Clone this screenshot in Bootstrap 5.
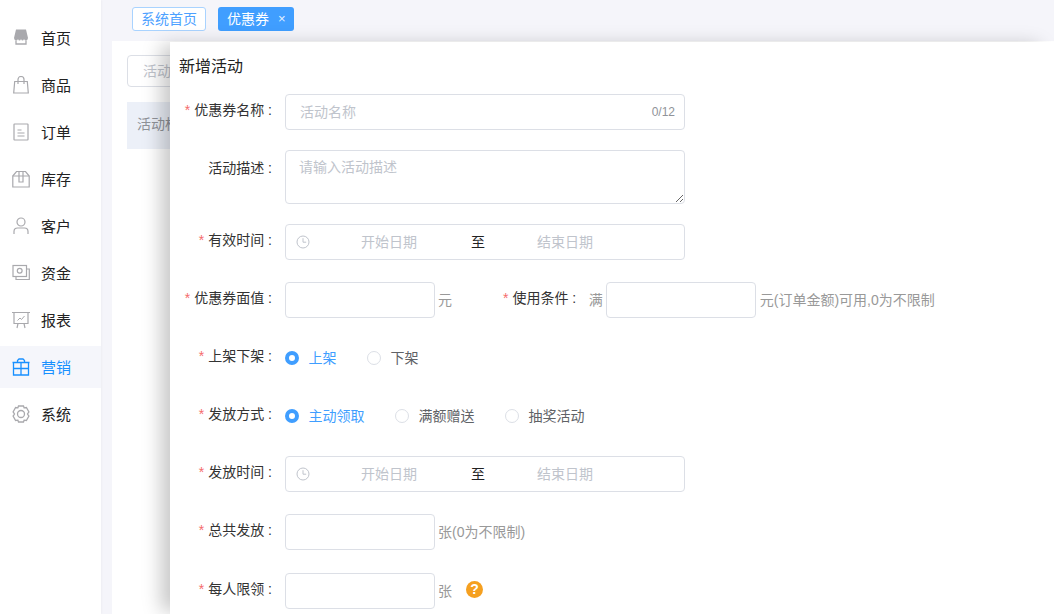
<!DOCTYPE html>
<html lang="zh">
<head>
<meta charset="utf-8">
<title>新增活动</title>
<link href="https://cdn.jsdelivr.net/npm/bootstrap@5.3.0/dist/css/bootstrap.min.css" rel="stylesheet">
<style>
html,body{height:100%;overflow:hidden}
body{font-family:"Liberation Sans","Noto Sans CJK SC",sans-serif;font-size:14px;color:#222;background:#f5f5fa}
.shell{height:614px;width:1054px}
.side{width:101px;background:#fff;padding-top:17px;flex:none;box-shadow:1px 0 2px rgba(0,0,0,.03)}
.side-item{height:42px;margin-bottom:5px;padding-left:12px;gap:11px;color:#222;font-size:15px}
.side-item span{padding-top:2px}
.side-item svg{width:18px;height:18px;flex:none;color:#a9a9ad}
.side-item.on{background:#f5f6fb;color:#1890ff}
.side-item.on svg{color:#1890ff}
.main{min-width:0}
.tabs{height:41px;padding:7px 0 0 31px;gap:12px}
.tab-a{height:24px;line-height:22px;padding:0 8px;border:1px solid #a9d3ff;border-radius:3px;background:#fff;color:#4da1ff;font-size:14px}
.tab-b{height:24px;line-height:24px;padding:0 8px 0 9px;border-radius:3px;background:#409eff;color:#fff;font-size:14px;gap:9px}
.tab-b span:last-child{font-size:13px;line-height:24px;opacity:.85}
.pane{background:#fff;margin-left:11px;height:573px;padding:14px 15px}
.fake-filter{width:150px;height:32px;border:1px solid #dcdfe6;border-radius:4px;padding-left:15px;line-height:30px;color:#c0c4cc;font-size:14px;overflow:hidden}
.fake-head{height:47px;margin-top:15px;background:#ecf0f8;padding-left:10px;line-height:44px;color:#909399;width:150px}
.drawer{position:absolute;left:170px;top:42px;right:0;bottom:0;background:#fff;box-shadow:-12px 0 18px -3px rgba(0,0,0,.22);padding:15px 0 0 0}
.drawer-title{font-size:16px;line-height:20px;color:#222;padding-left:9px;margin-bottom:17px}
.frow{display:flex;align-items:flex-start}
.flabel{width:102px;text-align:right;flex:none;line-height:20px;margin-right:13px;padding-top:6px;color:#333;white-space:nowrap}
.flabel.tall{padding-top:8px}
.req{color:#f56c6c;margin-right:4px}
.box{border:1px solid #dcdfe6;border-radius:4px;height:36px;background:#fff;flex:none}
.w400{width:400px}
.w150{width:150px}
.hint{color:#c0c4cc}
.unit{color:#999;line-height:20px;margin-left:3px;padding-top:8px}
.unit.wide{margin-left:4px}
.name-box{padding:0 9px 0 14px;line-height:34px}
.count{color:#909399;font-size:12px}
.area{width:400px;height:54px;border:1px solid #dcdfe6;border-radius:4px;padding:6px 13px;font-size:14px;line-height:20px;display:block;resize:vertical;outline:0;color:#222;font-family:inherit}
.area::placeholder{color:#c0c4cc;opacity:1}
.date-box{line-height:34px;position:relative}
.date-box svg{position:absolute;left:10px;top:10px;width:14px;height:14px;color:#c0c4cc}
.d1,.d2,.dto{position:absolute;top:0}
.d1{left:75px}.d2{left:251px}.dto{left:185px;color:#222}
.radios{padding-top:6px;line-height:20px;height:36px}
.rad{display:inline-flex;align-items:center;gap:9.5px;margin-right:30.5px;color:#606266;line-height:20px;padding-top:2px}
.dot{width:14px;height:14px;border-radius:50%;border:1px solid #dcdfe6;background:#fff;flex:none}
.rad.on{color:#409eff}
.rad.on .dot{border:4px solid #409eff}
.cond-label{margin-left:51px;line-height:20px;padding-top:6px;white-space:nowrap;color:#333}
.man{color:#999;margin:0 3px 0 12.5px;padding-top:8px;line-height:20px}
.qmark{width:17px;height:17px;border-radius:50%;background:#f5a020;color:#fff;font-size:14px;font-weight:700;line-height:17px;text-align:center;margin-left:14px;margin-top:8px;flex:none}
.m20{margin-bottom:20px}
.m22{margin-bottom:22px}
.m23{margin-bottom:23px}
</style>
</head>
<body>
<div class="shell d-flex">
  <nav class="side">
    <div class="side-item d-flex align-items-center"><svg viewBox="0 0 18 18"><path fill="currentColor" d="M4 .5h10l2 8.500q-.5 2.500-2 2.500t-2-1.500q-.5 1.500-1.500 1.500T9 10q-.5 1.500-1.500 1.500T6 10q-.5 1.500-2 1.500T2 9z"/><path fill="none" stroke="currentColor" stroke-width="1.300" d="M4 11.500v3.500h10v-3.500"/></svg><span>首页</span></div>
    <div class="side-item d-flex align-items-center"><svg viewBox="0 0 18 18" fill="none" stroke="currentColor" stroke-width="1.200"><path d="M2.700 5.500h12.600l1 11.500H1.700z"/><path d="M6 8V3.500a3 3 0 0 1 6 0V8"/></svg><span>商品</span></div>
    <div class="side-item d-flex align-items-center"><svg viewBox="0 0 18 18" fill="none" stroke="currentColor" stroke-width="1.200"><rect x="2" y="1" width="14" height="16" rx=".5"/><path d="M5.500 7h4M5.500 10h7M5.500 13h7"/></svg><span>订单</span></div>
    <div class="side-item d-flex align-items-center"><svg viewBox="0 0 18 18" fill="none" stroke="currentColor" stroke-width="1.200"><path d="M.8 6 4.500 1.500h9L17.200 6v11H.8z"/><path d="M.8 6h16.400M7 1.500v10.500h4V1.500"/></svg><span>库存</span></div>
    <div class="side-item d-flex align-items-center"><svg viewBox="0 0 18 18" fill="none" stroke="currentColor" stroke-width="1.200"><circle cx="9" cy="5" r="4"/><path d="M2 17v-2.500a3.500 3.500 0 0 1 3.500-3.500h7a3.500 3.500 0 0 1 3.500 3.500V17"/></svg><span>客户</span></div>
    <div class="side-item d-flex align-items-center"><svg viewBox="0 0 18 18" fill="none" stroke="currentColor" stroke-width="1.200"><rect x="1" y="1.500" width="13.500" height="11"/><circle cx="7.700" cy="6.800" r="2.400"/><path d="M14.500 5h2.800v10.500H4V12.500"/></svg><span>资金</span></div>
    <div class="side-item d-flex align-items-center"><svg viewBox="0 0 18 18" fill="none" stroke="currentColor" stroke-width="1.200"><path d="M0 1.500h18M2 1.500V12.500h14V1.500M6 12.500l-1 4.500M12 12.500l1 4.500"/><path stroke-width="1" d="m5.500 9.500 2.500-2.500 1.500 1.500L12.500 5"/></svg><span>报表</span></div>
    <div class="side-item on d-flex align-items-center"><svg viewBox="0 0 18 18" fill="none" stroke="currentColor" stroke-width="1.300"><path d="M.5 4.500h17M1.500 4.500V17h15V4.500M1.500 10.500h15M9 4.500V17M5.500 4.500V2.500l1.500-1.500h4l1.500 1.500v2"/></svg><span>营销</span></div>
    <div class="side-item d-flex align-items-center"><svg viewBox="0 0 18 18" fill="none" stroke="currentColor" stroke-width="1.300"><path d="M6.500 1h5l.6 1.800 2.300-.3 2.500 4.400-1.400 2.100 1.400 2.100-2.500 4.400-2.300-.3-.6 1.800h-5l-.6-1.800-2.300.3L1.100 11.100l1.400-2.100-1.400-2.100L3.600 2.500l2.300.3z"/><circle cx="9" cy="9" r="3.500"/></svg><span>系统</span></div>
  </nav>
  <main class="main flex-grow-1">
    <div class="tabs d-flex">
      <div class="tab-a">系统首页</div>
      <div class="tab-b d-flex"><span>优惠券</span><span>×</span></div>
    </div>
    <div class="pane">
      <div class="fake-filter">活动</div>
      <div class="fake-head">活动标题</div>
    </div>
  </main>
</div>
<aside class="drawer">
  <div class="drawer-title">新增活动</div>
  <div class="frow m20">
    <div class="flabel"><span class="req">*</span>优惠券名称 :</div>
    <div class="box w400 name-box d-flex justify-content-between"><span class="hint">活动名称</span><span class="count">0/12</span></div>
  </div>
  <div class="frow m20">
    <div class="flabel tall">活动描述 :</div>
    <textarea class="area" placeholder="请输入活动描述"></textarea>
  </div>
  <div class="frow m22">
    <div class="flabel"><span class="req">*</span>有效时间 :</div>
    <div class="box w400 date-box hint"><svg viewBox="0 0 14 14" fill="none" stroke="currentColor"><circle cx="7" cy="7" r="6"/><path d="M7 3.200v4h3.200"/></svg><span class="d1">开始日期</span><span class="dto">至</span><span class="d2">结束日期</span></div>
  </div>
  <div class="frow m22">
    <div class="flabel"><span class="req">*</span>优惠券面值 :</div>
    <div class="box w150"></div>
    <div class="unit">元</div>
    <div class="cond-label"><span class="req">*</span>使用条件 :</div>
    <div class="man">满</div>
    <div class="box w150"></div>
    <div class="unit wide">元(订单金额)可用,0为不限制</div>
  </div>
  <div class="frow m22">
    <div class="flabel"><span class="req">*</span>上架下架 :</div>
    <div class="radios"><span class="rad on"><span class="dot"></span>上架</span><span class="rad"><span class="dot"></span>下架</span></div>
  </div>
  <div class="frow m22">
    <div class="flabel"><span class="req">*</span>发放方式 :</div>
    <div class="radios"><span class="rad on"><span class="dot"></span>主动领取</span><span class="rad"><span class="dot"></span>满额赠送</span><span class="rad"><span class="dot"></span>抽奖活动</span></div>
  </div>
  <div class="frow m22">
    <div class="flabel"><span class="req">*</span>发放时间 :</div>
    <div class="box w400 date-box hint"><svg viewBox="0 0 14 14" fill="none" stroke="currentColor"><circle cx="7" cy="7" r="6"/><path d="M7 3.200v4h3.200"/></svg><span class="d1">开始日期</span><span class="dto">至</span><span class="d2">结束日期</span></div>
  </div>
  <div class="frow m23">
    <div class="flabel"><span class="req">*</span>总共发放 :</div>
    <div class="box w150"></div>
    <div class="unit">张(0为不限制)</div>
  </div>
  <div class="frow">
    <div class="flabel"><span class="req">*</span>每人限领 :</div>
    <div class="box w150"></div>
    <div class="unit">张</div>
    <div class="qmark">?</div>
  </div>
</aside>
</body>
</html>
